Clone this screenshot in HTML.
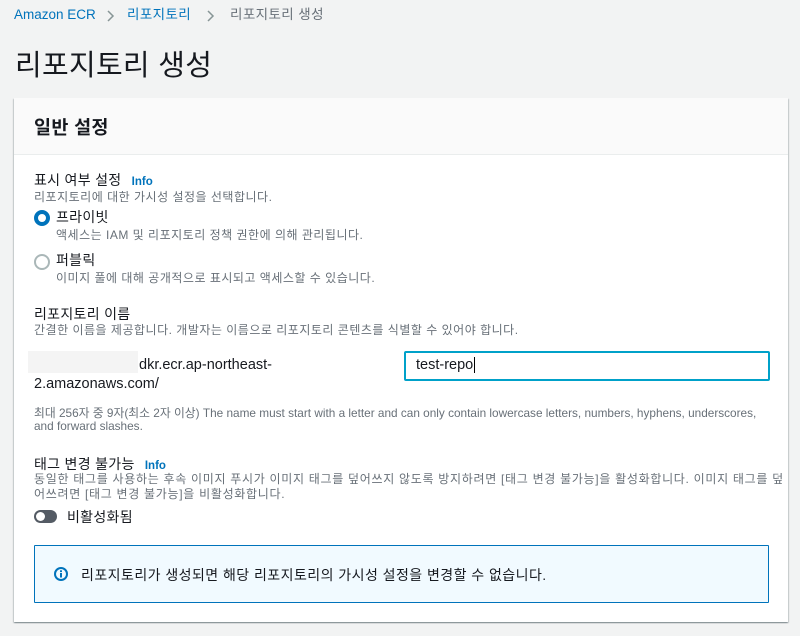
<!DOCTYPE html><html><head><meta charset="utf-8"><style>
body{margin:0;width:800px;height:636px;background:#f2f3f3;font-family:"Liberation Sans","Noto Sans CJK KR",sans-serif;color:#16191f;position:relative;overflow:hidden}
.a{position:absolute;white-space:nowrap}
.g{color:#687078;font-size:12px;letter-spacing:0.5px}
.e{letter-spacing:0}
.l{font-size:14px;letter-spacing:0.3px}
.info{color:#0073bb;font-weight:bold;font-size:11.5px;letter-spacing:0}
.bc{top:6px;font-size:13.5px;height:18px;line-height:18px}
</style></head><body>
<div class="a bc" style="left:14px;color:#0073bb"><span style="font-family:'Liberation Sans','Noto Sans CJK KR',sans-serif">Amazon ECR</span></div>
<svg class="a" style="left:106px;top:9px" width="10" height="14"><path d="M2 2l5 5-5 5" fill="none" stroke="#879596" stroke-width="1.5"/></svg>
<div class="a bc" style="left:127px;color:#0073bb;letter-spacing:0.4px">리포지토리</div>
<svg class="a" style="left:206px;top:9px" width="10" height="14"><path d="M2 2l5 5-5 5" fill="none" stroke="#879596" stroke-width="1.5"/></svg>
<div class="a bc" style="left:230px;color:#687078;letter-spacing:0.4px">리포지토리 생성</div>
<div class="a" style="left:15px;top:42px;font-size:29px;letter-spacing:0.3px">리포지토리 생성</div>
<div class="a" style="left:14px;top:98px;width:774px;height:524px;background:#fff;box-shadow:0 1px 1px 0 rgba(0,28,36,.3),1px 1px 1px 0 rgba(0,28,36,.15),-1px 1px 1px 0 rgba(0,28,36,.15)"></div>
<div class="a" style="left:14px;top:98px;width:774px;height:56px;background:#fafafa;border-bottom:1px solid #eaeded"></div>
<div class="a" style="left:34px;top:114px;font-size:18.5px;font-weight:bold;letter-spacing:0.3px">일반 설정</div>
<div class="a l" style="left:34px;top:170px">표시 여부 설정 <span class="info" style="margin-left:6px">Info</span></div>
<div class="a g" style="left:34px;top:188px">리포지토리에 대한 가시성 설정을 선택합니다.</div>
<div class="a" style="left:34px;top:210px;width:8px;height:8px;border:4px solid #0073bb;border-radius:50%;background:#fff"></div>
<div class="a l" style="left:56px;top:207px">프라이빗</div>
<div class="a g" style="left:56px;top:226px">액세스는 IAM 및 리포지토리 정책 권한에 의해 관리됩니다.</div>
<div class="a" style="left:34px;top:254px;width:12px;height:12px;border:2px solid #aab7b8;border-radius:50%;background:#fff"></div>
<div class="a l" style="left:56px;top:250px">퍼블릭</div>
<div class="a g" style="left:56px;top:269px">이미지 풀에 대해 공개적으로 표시되고 액세스할 수 있습니다.</div>
<div class="a l" style="left:34px;top:304px">리포지토리 이름</div>
<div class="a g" style="left:34px;top:321px">간결한 이름을 제공합니다. 개발자는 이름으로 리포지토리 콘텐츠를 식별할 수 있어야 합니다.</div>
<div class="a" style="left:28px;top:351px;width:110px;height:22px;background:#f4f4f4"></div>
<div class="a" style="left:139px;top:357px;font-size:14.5px">dkr.ecr.ap-northeast-</div>
<div class="a" style="left:34px;top:376px;font-size:14.5px">2.amazonaws.com/</div>
<div class="a" style="left:404px;top:351px;width:362px;height:26px;border:2px solid #00a1c9;border-radius:2px;box-sizing:content-box"></div>
<div class="a" style="left:416px;top:357px;font-size:14.5px">test-repo<span style="border-left:1px solid #000;margin-left:1px"></span></div>
<div class="a g" style="left:34px;top:404px;letter-spacing:0;font-size:11.8px">최대 256자 중 9자(최소 2자 이상) The name must start with a letter and can only contain lowercase letters, numbers, hyphens, underscores,</div>
<div class="a g e" style="left:34px;top:419px;font-size:11.8px">and forward slashes.</div>
<div class="a l" style="left:34px;top:454px">태그 변경 불가능 <span class="info" style="margin-left:6px">Info</span></div>
<div class="a g" style="left:34px;top:470px;letter-spacing:0.7px">동일한 태그를 사용하는 후속 이미지 푸시가 이미지 태그를 덮어쓰지 않도록 방지하려면 [태그 변경 불가능]을 활성화합니다. 이미지 태그를 덮</div>
<div class="a g" style="left:34px;top:485px;letter-spacing:0.7px">어쓰려면 [태그 변경 불가능]을 비활성화합니다.</div>
<div class="a" style="left:34px;top:510px;width:23px;height:13px;background:#545b64;border-radius:7px"></div>
<div class="a" style="left:36px;top:512px;width:9px;height:9px;background:#fff;border-radius:50%"></div>
<div class="a l" style="left:67px;top:507px">비활성화됨</div>
<div class="a" style="left:34px;top:545px;width:733px;height:56px;background:#f1faff;border:1px solid #0073bb;border-radius:1px"></div>
<svg class="a" style="left:54px;top:567px" width="14" height="14" viewBox="0 0 14 14"><circle cx="7" cy="7" r="6" fill="none" stroke="#0073bb" stroke-width="2"/><rect x="6" y="6" width="2" height="4.5" fill="#0073bb"/><rect x="6" y="3.3" width="2" height="1.8" fill="#0073bb"/></svg>
<div class="a" style="left:81px;top:565px;font-size:14px;letter-spacing:0.45px">리포지토리가 생성되면 해당 리포지토리의 가시성 설정을 변경할 수 없습니다.</div>
</body></html>
